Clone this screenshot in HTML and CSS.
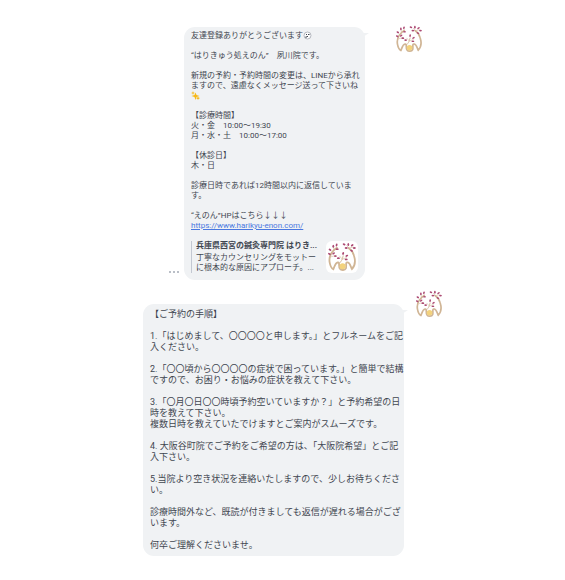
FILE: index.html
```
<!DOCTYPE html>
<html lang="ja">
<head>
  <meta charset="UTF-8">
  <meta name="viewport" content="width=device-width, initial-scale=1">
  <title>はりきゅう処えのん</title>
  <link rel="stylesheet" href="styles.css">
</head>
<body>
  <!-- Logo, shared by the avatars and the link preview -->
  <svg class="defs" aria-hidden="true">
    <symbol id="logo" viewBox="0 0 100 100">
      <g fill="none" stroke="#d0b595" stroke-width="6" stroke-linecap="round">
        <path d="M33 19C14 32 5 48 9 69C11 80 15 88 21 91C25 84 26 70 36 68C44 67 37 82 43 89C47 95 60 95 63 88C66 80 60 66 69 68C78 70 79 84 83 90C93 80 95 62 90 46C87 34 81 26 72 20"/>
        <path d="M42 70C47 65 51 60 54 46" stroke-width="3"/>
        <path d="M10 51C17 47 23 47 29 45M23 27L22 17M74 20L87 17M76 24L66 12M51 57L42 47M52 57L65 52" stroke-width="2"/>
      </g>
      <circle cx="52" cy="81" r="10" fill="#f3d27c"/>
      <g fill="#ac4a73">
        <ellipse cx="21" cy="14" rx="3" ry="5"/>
        <ellipse cx="32" cy="10" rx="3" ry="5" transform="rotate(15 32 10)"/>
        <ellipse cx="34" cy="24" rx="5" ry="3"/>
        <ellipse cx="10" cy="26" rx="5" ry="3" transform="rotate(35 10 26)"/>
        <ellipse cx="8" cy="40" rx="5" ry="3" transform="rotate(30 8 40)"/>
        <ellipse cx="22" cy="38" rx="5" ry="3" transform="rotate(-35 22 38)"/>
        <ellipse cx="28" cy="47" rx="5" ry="3"/>
        <ellipse cx="57" cy="8" rx="5" ry="3" transform="rotate(25 57 8)"/>
        <ellipse cx="71" cy="8" rx="3" ry="5"/>
        <ellipse cx="64" cy="20" rx="5" ry="3"/>
        <ellipse cx="84" cy="11" rx="5" ry="3" transform="rotate(-35 84 11)"/>
        <ellipse cx="91" cy="20" rx="5" ry="3"/>
        <ellipse cx="82" cy="29" rx="5" ry="3" transform="rotate(30 82 29)"/>
        <ellipse cx="54" cy="38" rx="3" ry="5" transform="rotate(10 54 38)"/>
        <ellipse cx="66" cy="46" rx="5" ry="3" transform="rotate(-30 66 46)"/>
        <ellipse cx="38" cy="54" rx="5" ry="3"/>
        <ellipse cx="64" cy="58" rx="5" ry="3"/>
      </g>
    </symbol>
  </svg>

  <main class="chat">
    <article class="message message-greeting">
      <button class="more" type="button" aria-label="メニュー"><i></i><i></i><i></i></button>
      <div class="bubble">
        <p>友達登録ありがとうございます<svg class="emoji" viewBox="0 0 18 18" aria-hidden="true"><circle cx="9" cy="9" r="7" fill="#fff" stroke="#b4b8bf" stroke-width="2"/><path d="M6 7h2M10 7h3M7 11h3M6 11v3" fill="none" stroke="#3f4650" stroke-width="2"/></svg></p>
        <p>“はりきゅう処えのん”　夙川院です。</p>
        <p>新規の予約・予約時間の変更は、LINEから承れ<br>ますので、遠慮なくメッセージ送って下さいね<br><svg class="emoji" viewBox="0 0 18 18" aria-hidden="true"><g fill="#f7b916"><path d="M9 3l2 5 6 2-6 2-2 6-2-6-6-2 6-2z"/><path d="M4 0l1 3 3 1-3 1-1 3-1-3-3-1 3-1z"/><path d="M14 11l1 2 3 1-3 2-1 2-1-2-3-2 3-1z"/></g></svg></p>
        <p>【診療時間】<br>火・金　10:00〜19:30<br>月・水・土　10:00〜17:00</p>
        <p>【休診日】<br>木・日</p>
        <p>診療日時であれば12時間以内に返信していま<br>す。</p>
        <p>“えのん”HPはこちら↓↓↓<br><a href="https://www.harikyu-enon.com/">https://www.harikyu-enon.com/</a></p>
        <div class="preview">
          <div class="preview-text">
            <h2>兵庫県西宮の鍼灸専門院 はりき...</h2>
            <p>丁寧なカウンセリングをモットー<br>に根本的な原因にアプローチ。...</p>
          </div>
          <svg class="preview-image" viewBox="0 0 32 32" role="img" aria-label="えのん"><use href="#logo" x="1" y="1" width="30" height="30"/></svg>
        </div>
      </div>
      <svg class="avatar" role="img" aria-label="えのん"><use href="#logo"/></svg>
    </article>

    <article class="message message-steps">
      <div class="bubble">
        <p>【ご予約の手順】</p>
        <p>1.「はじめまして、〇〇〇〇と申します。」とフルネームをご記<br>入ください。</p>
        <p>2.「〇〇頃から〇〇〇〇の症状で困っています。」と簡単で結構<br>ですので、お困り・お悩みの症状を教えて下さい。</p>
        <p>3.「〇月〇日〇〇時頃予約空いていますか？」と予約希望の日<br>時を教えて下さい。<br>複数日時を教えていたでけますとご案内がスムーズです。</p>
        <p>4. 大阪谷町院でご予約をご希望の方は、「大阪院希望」とご記<br>入下さい。</p>
        <p>5.当院より空き状況を連絡いたしますので、少しお待ちくださ<br>い。</p>
        <p>診療時間外など、既読が付きましても返信が遅れる場合がござ<br>います。</p>
        <p>何卒ご理解くださいませ。</p>
      </div>
      <svg class="avatar" role="img" aria-label="えのん"><use href="#logo"/></svg>
    </article>
  </main>
</body>
</html>
```
FILE: styles.css
```
* {
  box-sizing: border-box;
}

body {
  margin: 0;
  background: #fff;
  color: #3f4650;
  font-family: Roboto, "Noto Sans CJK JP", sans-serif;
}

p, h2 {
  margin: 0;
}

.defs {
  position: absolute;
  width: 0;
  height: 0;
}

.chat {
  display: flex;
  flex-direction: column;
  gap: 10px;
  padding-top: 25px;
}

.message {
  display: flex;
  justify-content: flex-end;
  align-items: flex-start;
}

.message-greeting {
  padding-right: 142px;
  font-size: 8px;
  line-height: 10px;
}

.message-steps {
  padding-right: 122px;
  font-size: 9px;
  line-height: 11px;
}

.bubble {
  position: relative;
  padding: 4px 7px 7px;
  border-radius: 11px;
  background: #f0f2f4;
  white-space: nowrap;
}

.message-greeting .bubble {
  width: 181px;
  margin: 2px 30px 0 0;
}

.message-steps .bubble {
  width: 261px;
  margin: 14px 11px 0 0;
  padding-top: 5px;
  padding-bottom: 5px;
}

/* bubble tail */
.bubble::after {
  content: "";
  position: absolute;
  top: 6px;
  right: -4px;
  border-top: 4px solid #f0f2f4;
  border-right: 6px solid transparent;
}

.message-greeting .bubble > p {
  margin-bottom: 10px;
}

.message-steps p + p {
  margin-top: 11px;
}

.bubble a {
  color: #4a78e0;
}

.emoji {
  width: 9px;
  height: 9px;
  vertical-align: -2px;
}

.more {
  display: flex;
  align-self: flex-end;
  gap: 2px;
  margin: 0 5px 7px 0;
  padding: 0;
  border: 0;
  background: none;
}

.more i {
  width: 2px;
  height: 2px;
  border-radius: 50%;
  background: #a3aab4;
}

.avatar {
  width: 28px;
  height: 28px;
  flex: none;
}

.preview {
  display: flex;
  justify-content: space-between;
}

.preview-text {
  padding-left: 4px;
  border-left: 1px solid #c3c8d2;
}

.preview h2 {
  margin-bottom: 2px;
  font-size: 8px;
  line-height: 10px;
}

.preview-image {
  width: 32px;
  height: 32px;
  border-radius: 6px;
  background: #fff;
}
```
